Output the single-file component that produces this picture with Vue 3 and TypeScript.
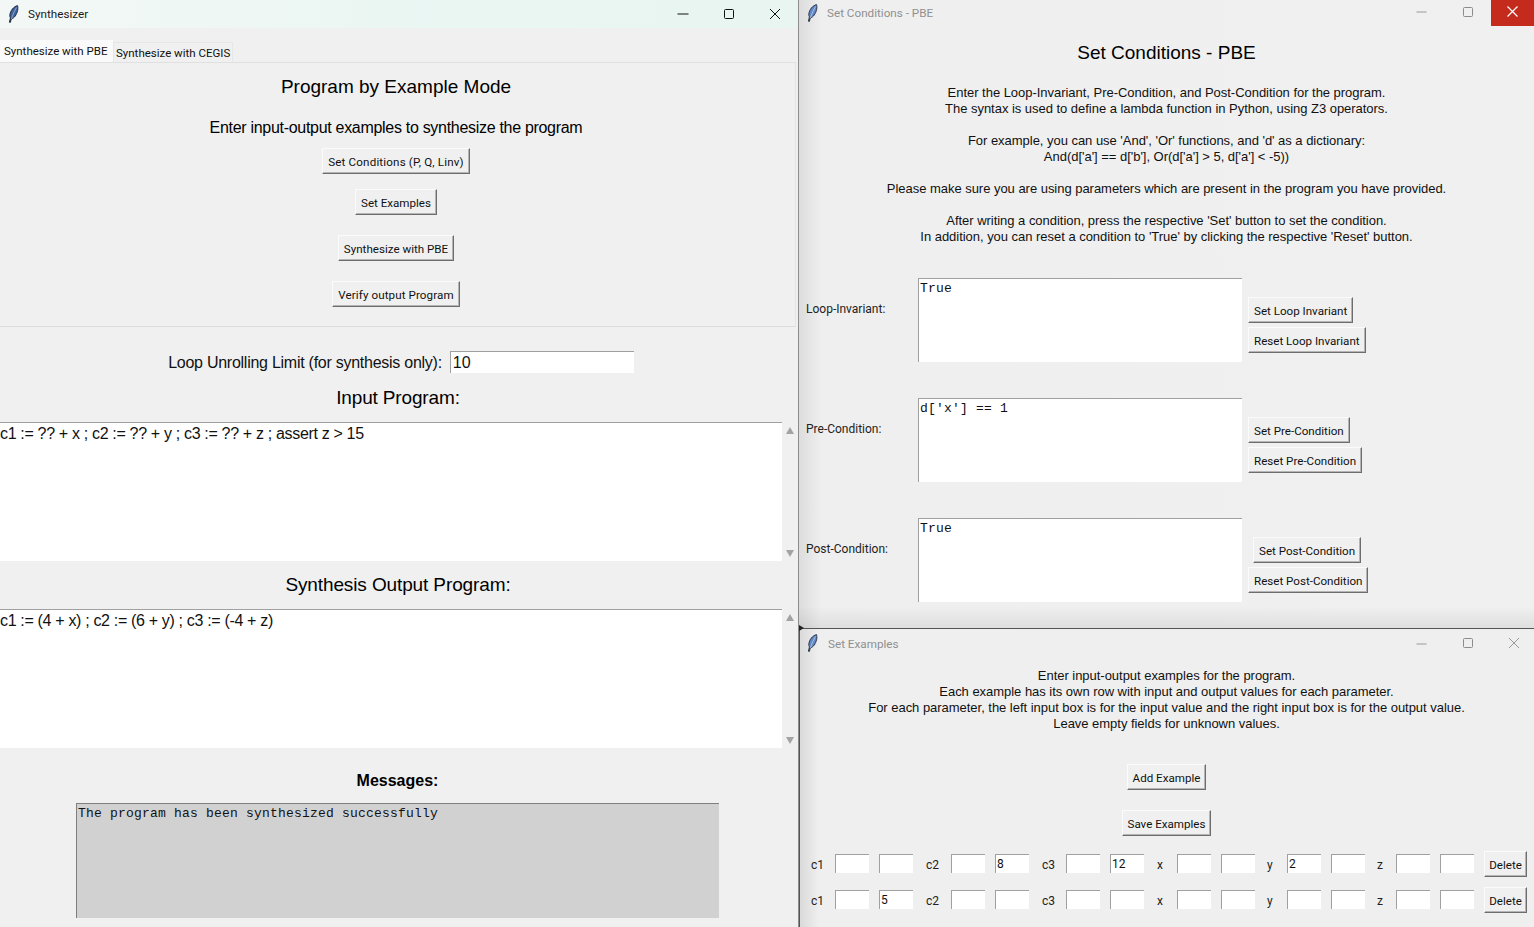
<script setup lang="ts">
const infoA = [
  'Enter the Loop-Invariant, Pre-Condition, and Post-Condition for the program.',
  'The syntax is used to define a lambda function in Python, using Z3 operators.',
  '',
  "For example, you can use 'And', 'Or' functions, and 'd' as a dictionary:",
  "And(d['a'] == d['b'], Or(d['a'] > 5, d['a'] < -5))",
  '',
  'Please make sure you are using parameters which are present in the program you have provided.',
  '',
  "After writing a condition, press the respective 'Set' button to set the condition.",
  "In addition, you can reset a condition to 'True' by clicking the respective 'Reset' button.",
]
const conds = [
  { label: 'Loop-Invariant:', text: 'True', set: 'Set Loop Invariant', reset: 'Reset Loop Invariant', centered: false },
  { label: 'Pre-Condition:', text: "d['x'] == 1", set: 'Set Pre-Condition', reset: 'Reset Pre-Condition', centered: false },
  { label: 'Post-Condition:', text: 'True', set: 'Set Post-Condition', reset: 'Reset Post-Condition', centered: true },
]
const exInfo = [
  'Enter input-output examples for the program.',
  'Each example has its own row with input and output values for each parameter.',
  'For each parameter, the left input box is for the input value and the right input box is for the output value.',
  'Leave empty fields for unknown values.',
]
const groups = [
  { name: 'c1', w: 24, after: 13 },
  { name: 'c2', w: 25, after: 13 },
  { name: 'c3', w: 24, after: 13 },
  { name: 'x', w: 20, after: 12 },
  { name: 'y', w: 20, after: 12 },
  { name: 'z', w: 19, after: 10 },
]
const rows: Record<string, [string, string]>[] = [
  { c1: ['', ''], c2: ['', '8'], c3: ['', '12'], x: ['', ''], y: ['2', ''], z: ['', ''] },
  { c1: ['', '5'], c2: ['', ''], c3: ['', ''], x: ['', ''], y: ['', ''], z: ['', ''] },
]
const feather = 'M10.500 .6C6.600 1.600 3.400 5.400 2.800 10c-.1 1.200.1 2.200.6 2.900L2.400 17.200l1 .2.9-3.500c3-.6 5.400-4.200 6.400-8.600.3-1.800.2-3.700-.2-4.700z'
const vein = 'M9.500 2.500C7.500 6 5.600 10 4.300 13.900'
</script>

<template>
  <div class="desktop">
    <section class="win main">
      <header class="bar mint">
        <svg class="ico" viewBox="0 0 13 18"><path :d="feather" fill="#3f629c" stroke="#0d1524" stroke-width=".8" /><path :d="vein" fill="none" stroke="#a9c0e6" stroke-width=".7" /></svg>
        <span class="wtitle">Synthesizer</span>
        <div class="ctrls">
          <svg viewBox="0 0 46 28"><path d="M17.500 14h11" stroke="#111" fill="none" /></svg>
          <svg viewBox="0 0 46 28"><rect x="18.500" y="9.500" width="9" height="9" rx="1" stroke="#111" fill="none" /></svg>
          <svg viewBox="0 0 46 28"><path d="M18 9l10 10M28 9L18 19" stroke="#111" fill="none" /></svg>
        </div>
      </header>
      <nav class="tabs">
        <span class="tab on">Synthesize with PBE</span>
        <span class="tab">Synthesize with CEGIS</span>
      </nav>
      <div class="pane">
        <h1 class="h18 pt">Program by Example Mode</h1>
        <p class="sub">Enter input-output examples to synthesize the program</p>
        <button class="btn b1">Set Conditions (P, Q, Linv)</button>
        <button class="btn b2">Set Examples</button>
        <button class="btn b3">Synthesize with PBE</button>
        <button class="btn b3 wider">Verify output Program</button>
      </div>
      <div class="limit">
        <label class="limlab">Loop Unrolling Limit (for synthesis only):</label>
        <div class="entry wide">10</div>
      </div>
      <h2 class="h18 ip">Input Program:</h2>
      <div class="scrollrow">
        <div class="code">c1 := ?? + x ; c2 := ?? + y ; c3 := ?? + z ; assert z &gt; 15</div>
        <div class="sb"><i class="up"></i><i class="down"></i></div>
      </div>
      <h2 class="h18 op">Synthesis Output Program:</h2>
      <div class="scrollrow">
        <div class="code">c1 := (4 + x) ; c2 := (6 + y) ; c3 := (-4 + z)</div>
        <div class="sb"><i class="up"></i><i class="down"></i></div>
      </div>
      <h3 class="msgh">Messages:</h3>
      <div class="msg mono">The program has been synthesized successfully</div>
    </section>

    <section class="win cond">
      <header class="bar cbar">
        <svg class="ico" viewBox="0 0 13 18"><path :d="feather" fill="#6088c6" stroke="#141c2c" stroke-width=".8" /><path :d="vein" fill="none" stroke="#c3d4ef" stroke-width=".7" /></svg>
        <span class="wtitle dim">Set Conditions - PBE</span>
        <div class="ctrls">
          <svg viewBox="0 0 46 28"><path d="M17.500 12h10" stroke="#999" fill="none" /></svg>
          <svg viewBox="0 0 46 28"><rect x="18.500" y="7.500" width="9" height="9" rx="1" stroke="#8c8c8c" fill="none" /></svg>
          <svg class="red" viewBox="0 0 43 27"><path d="M16.500 7.500l10 10M26.500 7.500l-10 10" stroke="#fff" stroke-width="1.200" fill="none" /></svg>
        </div>
      </header>
      <h1 class="h18 ctitle">Set Conditions - PBE</h1>
      <div class="info">
        <p v-for="(l, i) in infoA" :key="i" class="ln">{{ l }}</p>
      </div>
      <div class="crows">
        <div v-for="c in conds" :key="c.label" class="crow">
          <span class="clabel">{{ c.label }}</span>
          <div class="ctext mono">{{ c.text }}</div>
          <div class="cbtns">
            <button class="btn" :class="{ ctr: c.centered }">{{ c.set }}</button>
            <button class="btn">{{ c.reset }}</button>
          </div>
        </div>
      </div>
    </section>

    <section class="win exs">
      <header class="bar exbar">
        <svg class="ico" viewBox="0 0 13 18"><path :d="feather" fill="#6088c6" stroke="#141c2c" stroke-width=".8" /><path :d="vein" fill="none" stroke="#c3d4ef" stroke-width=".7" /></svg>
        <span class="wtitle dim">Set Examples</span>
        <div class="ctrls shift">
          <svg viewBox="0 0 46 28"><path d="M17.500 15h10" stroke="#999" fill="none" /></svg>
          <svg viewBox="0 0 46 28"><rect x="18.500" y="9.500" width="9" height="9" rx="1" stroke="#8c8c8c" fill="none" /></svg>
          <svg viewBox="0 0 46 28"><path d="M18 9l10 10M28 9L18 19" stroke="#999" fill="none" /></svg>
        </div>
      </header>
      <div class="exinfo">
        <p v-for="l in exInfo" :key="l" class="ln">{{ l }}</p>
      </div>
      <button class="btn ex1">Add Example</button>
      <button class="btn ex2">Save Examples</button>
      <div v-for="(r, i) in rows" :key="i" class="exrow">
        <div v-for="g in groups" :key="g.name" class="grp" :style="{ marginRight: g.after + 'px' }">
          <span class="glabel" :style="{ width: g.w + 'px' }">{{ g.name }}</span>
          <div class="entry small">{{ r[g.name][0] }}</div>
          <div class="entry small">{{ r[g.name][1] }}</div>
        </div>
        <button class="btn del">Delete</button>
      </div>
    </section>
  </div>
</template>

<style scoped>
.desktop {
  position: relative;
  width: 1534px;
  height: 927px;
  overflow: hidden;
  background: #f0f0f0;
  color: #000;
  font-family: "Liberation Sans", Arial, sans-serif;
}
h1, h2, h3, p { margin: 0; font-weight: normal; }
.win { position: absolute; background: #f0f0f0; display: flex; flex-direction: column; }
.main { left: 0; top: 0; width: 798px; height: 927px; border-right: 1px solid #8c8c8c; }
.cond {
  left: 799px; top: 0; width: 735px; height: 628px;
  background:
    linear-gradient(180deg, rgba(0, 0, 0, 0) calc(100% - 22px), rgba(0, 0, 0, .07) 100%),
    linear-gradient(90deg, #dcdcdc 0, #efefef 22px, #f0f0f0 100%);
}
.exs { left: 799px; top: 628px; width: 735px; height: 299px; border-top: 1px solid #555; box-shadow: inset 1px 0 0 #555; background: linear-gradient(90deg, #d9d9d9 0, #efefef 20px, #efefef 100%); }
.exs::before { content: ""; position: absolute; left: 0; top: -4px; border-left: 5px solid #222; border-top: 3px solid transparent; border-bottom: 3px solid transparent; }
.bar { height: 28px; flex: none; display: flex; align-items: center; position: relative; }
.mint { background: linear-gradient(90deg, #f3f8f6 0%, #e9f6f2 60%, #e8f5f1 100%); }
.ico { width: 13px; height: 18px; margin-left: 7px; flex: none; }
.cbar .ico { margin-top: -2px; }
.wtitle { margin-left: 8px; font: 11.700px Roboto, sans-serif; color: #1a1a1a; white-space: nowrap; }
.cbar .wtitle { margin-top: -2px; }
.exbar .wtitle { margin-left: 9px; margin-top: 2px; }
.dim { color: #8f8f8f; }
.ctrls { margin-left: auto; display: flex; }
.ctrls svg { width: 46px; height: 28px; display: block; }
.ctrls .red { background: #c42b1c; width: 43px; height: 27px; align-self: flex-start; margin-top: -1px; }
.shift { margin-right: -3px; }
.tabs { height: 34px; flex: none; display: flex; align-items: flex-end; border-bottom: 1px solid #e0e0e0; margin-right: 2px; }
.tab { font: 11.500px Roboto, sans-serif; height: 19px; line-height: 21px; padding: 0 2px; margin-left: 0; border: 1px solid #e6e6e6; border-bottom: none; color: #111; white-space: nowrap; }
.tab.on { height: 22px; line-height: 23px; background: #fafafa; border: none; margin-left: 0; padding: 0 0 0 4px; width: 113px; box-sizing: border-box; }
.pane { height: 263px; flex: none; margin-right: 2px; padding-right: 3px; border-right: 1px solid #e4e4e4; border-bottom: 1px solid #dcdcdc; display: flex; flex-direction: column; align-items: center; box-sizing: content-box; }
.h18 { font-size: 19px; line-height: 22px; color: #000; text-align: center; }
.pt { margin-top: 13px; }
.sub { font-size: 16px; line-height: 20px; margin-top: 20px; letter-spacing: -.3px; }
.btn {
  display: block;
  height: 26px;
  padding: 2px 5px 0;
  box-sizing: border-box;
  background: #f0f0f0;
  border: 1px solid;
  border-color: #fbfbfb #6d6d6d #6d6d6d #fbfbfb;
  box-shadow: inset -1px -1px 0 #b5b5b5;
  font: 11.600px Roboto, sans-serif;
  color: #111;
  white-space: nowrap;
}
.b1 { margin-top: 10px; letter-spacing: .17px; }
.b2 { margin-top: 15px; }
.b3 { margin-top: 20px; }
.wider { letter-spacing: .1px; }
.limit { display: flex; align-items: center; justify-content: center; height: 22px; margin-top: 24px; font-size: 16px; color: #111; gap: 8px; padding-left: 4px; letter-spacing: -.26px; }
.limlab { margin-top: 1px; }
.entry { background: #fff; border-top: 1px solid #a0a0a0; border-left: 1px solid #a0a0a0; box-sizing: border-box; color: #111; overflow: hidden; }
.wide { width: 184px; height: 22px; font-size: 16px; line-height: 21px; padding-left: 2px; letter-spacing: 0; }
.ip { margin-top: 14px; padding-right: 2px; letter-spacing: -.15px; }
.scrollrow { display: flex; height: 139px; flex: none; }
.ip + .scrollrow { margin-top: 13px; }
.code { width: 782px; background: #fff; border-top: 1px solid #a0a0a0; box-sizing: border-box; font-size: 16px; line-height: 20px; padding-top: 1px; color: #111; letter-spacing: -.33px; }
.sb { flex: 1; position: relative; }
.sb i { position: absolute; left: 4px; width: 0; height: 0; border-left: 4.500px solid transparent; border-right: 4.500px solid transparent; }
.up { top: 5px; border-bottom: 7px solid #a3a3a3; }
.down { bottom: 4px; border-top: 7px solid #a3a3a3; }
.op { margin-top: 13px; margin-bottom: 13px; padding-right: 2px; letter-spacing: -.12px; }
.msgh { font-size: 16px; font-weight: bold; text-align: center; line-height: 20px; margin-top: 23px; padding-right: 3px; }
.mono { font-family: "Liberation Mono", "Courier New", monospace; font-size: 13px; line-height: 16px; white-space: pre; color: #111; letter-spacing: .2px; }
.msg { margin: 12px 0 0 76px; width: 643px; height: 115px; background: #d1d1d1; border-top: 1px solid #7f7f7f; border-left: 1px solid #7f7f7f; box-sizing: border-box; padding: 2px 1px; }
.ctitle { margin-top: 14px; }
.info { margin-top: 21px; text-align: center; }
.ln { font-size: 13px; line-height: 16px; min-height: 16px; color: #111; letter-spacing: -.03px; }
.crows { display: flex; flex-direction: column; gap: 36px; margin-top: 33px; padding-left: 7px; }
.crow { display: flex; align-items: center; height: 84px; }
.clabel { width: 112px; flex: none; font: 12px Roboto, sans-serif; color: #222; margin-top: -23px; }
.ctext { width: 324px; height: 84px; background: #fff; border-top: 1px solid #a0a0a0; border-left: 1px solid #a0a0a0; box-sizing: border-box; padding: 2px 1px; flex: none; }
.cbtns { margin-left: 6px; display: flex; flex-direction: column; gap: 4px; align-items: flex-start; margin-top: 10px; }
.cbtns .ctr { margin-left: 5px; }
.exinfo { text-align: center; margin-top: 11px; }
.ex1 { align-self: center; margin-top: 32px; }
.ex2 { align-self: center; margin-top: 20px; }
.exrow { display: flex; align-items: center; padding-left: 12px; height: 26px; margin-top: 10px; }
.ex2 + .exrow { margin-top: 15px; }
.grp { display: flex; align-items: center; gap: 10px; }
.glabel { font: 12px Roboto, sans-serif; color: #222; margin-right: -10px; flex: none; margin-top: 2px; }
.small { width: 34px; height: 19px; margin-top: -2px; font: 12px/18px Roboto, sans-serif; padding-left: 1px; }
.del { height: 26px; padding: 2px 4px 0; width: 43px; }
</style>
